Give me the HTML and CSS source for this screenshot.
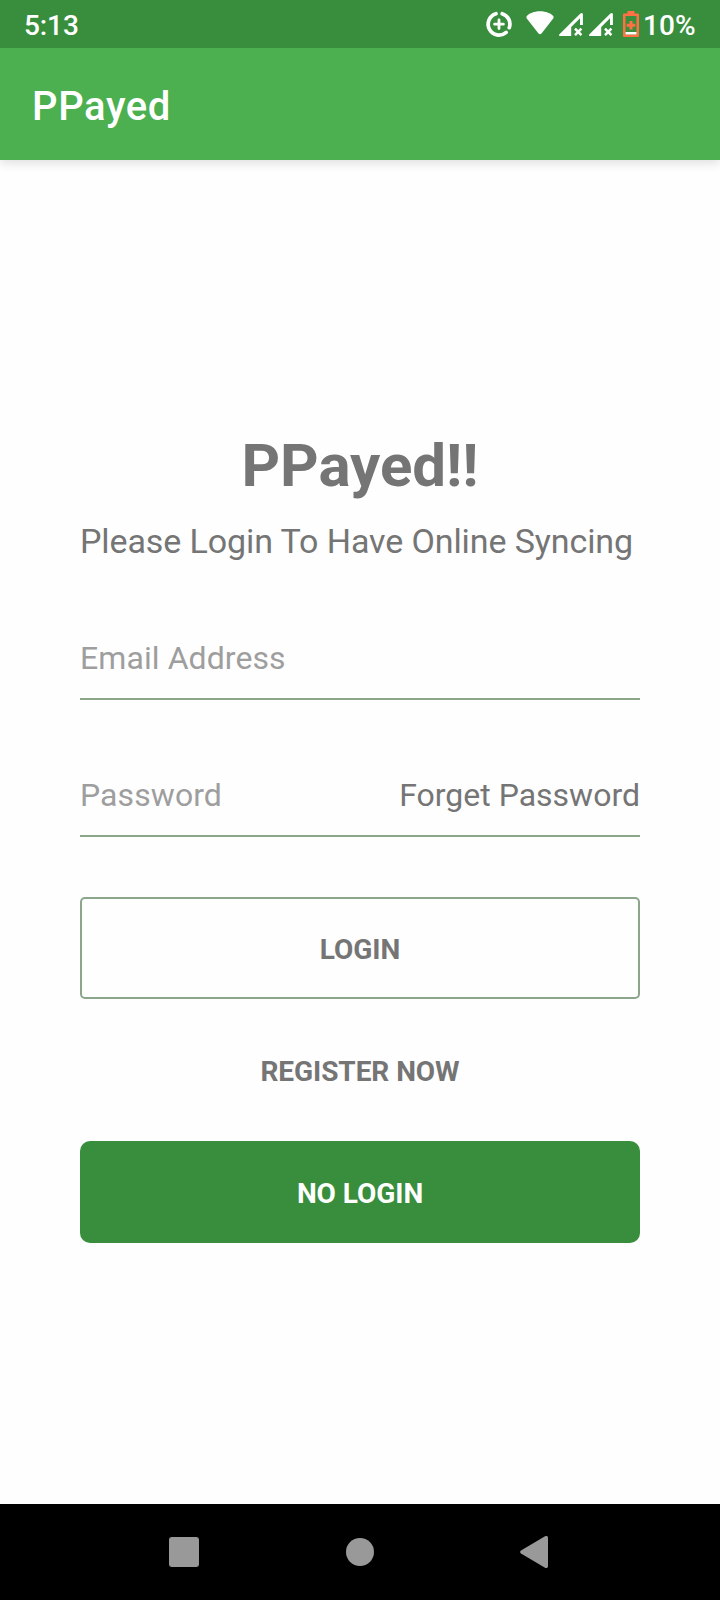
FILE: index.html
```html
<!DOCTYPE html>
<html lang="en">
<head>
<meta charset="utf-8">
<title>PPayed</title>
<link rel="stylesheet" href="styles.css">
</head>
<body>
<div class="screen">
  <header class="status">
    <span class="clock">5:13</span>
    <div class="status-icons">
      <svg width="160" height="48" viewBox="480 0 160 48">
        <g fill="none" stroke="#fff" stroke-linecap="round">
          <path d="M502.200 13.700A10.900 10.900 0 0 1 509.300 27.700" stroke-width="3.700"/>
          <path d="M496 13.700A10.900 10.900 0 1 0 506.200 32.400" stroke-width="3.700"/>
          <path d="M499 19.800v8.800M494.600 24.200h8.800" stroke-width="2.800"/>
        </g>
        <path fill="#fff" d="M540 11.300C533.700 11.300 529.500 13.500 526.800 15.900Q525.800 17 526.800 18.500L538.500 33.400Q540 35 541.500 33.400L553.200 18.500Q554.200 17 553.200 15.900C550.500 13.500 546.300 11.300 540 11.300Z"/>
        <g id="signal">
          <path fill="#fff" d="M560 36Q558.200 36 559.200 34.600L580.400 13.400Q582.900 12 582.900 14.500V25H580V18.200L571.200 27V36Z"/>
          <path d="M575 28.700L581.400 35.100M581.400 28.700L575 35.100" stroke="#fff" stroke-width="2.600"/>
        </g>
        <use href="#signal" x="30"/>
        <path fill="#ff7043" fill-rule="evenodd" d="M627.500 11h7v2.500h3.500q1 0 1 1v21.500q0 1-1 1h-14q-1 0-1-1v-21.500q0-1 1-1h3.500zM625.500 16v18.500h11V16z"/>
        <path fill="#ff7043" d="M629.500 21h3v2.800h2.800v3h-2.800v2.800h-3v-2.800h-2.800v-3h2.800z"/>
        <path fill="#fff" d="M625.500 32h11v2.500h-11z"/>
      </svg>
      <span class="battery">10%</span>
    </div>
  </header>
  <div class="appbar">PPayed</div>
  <main class="login">
    <h1 class="heading">PPayed!!</h1>
    <p class="subtitle">Please Login To Have Online Syncing</p>
    <div class="field"><span class="hint">Email Address</span></div>
    <div class="field"><span class="hint">Password</span><a class="forgot">Forget Password</a></div>
    <button class="btn outlined">LOGIN</button>
    <button class="btn plain">REGISTER NOW</button>
    <button class="btn filled">NO LOGIN</button>
  </main>
  <nav class="nav">
    <svg width="30" height="32" viewBox="0 0 30 32"><rect y="1" width="30" height="30" rx="3" fill="#999"/></svg>
    <svg width="28" height="32" viewBox="0 0 28 32"><circle cx="14" cy="16" r="14" fill="#999"/></svg>
    <svg width="28" height="32" viewBox="0 0 28 32"><path fill="#999" d="M1 14.500L25 .3Q28-.8 28 2V30Q28 32.800 25 31.700L1 17.500Q-.8 16 1 14.500Z"/></svg>
  </nav>
</div>
</body>
</html>
```
FILE: styles.css
```css
* { box-sizing: border-box; }
body {
  margin: 0;
  font-family: Roboto, sans-serif;
  color: #757575;
  background: #fefefe;
}
.screen {
  width: 720px;
  height: 1600px;
  display: flex;
  flex-direction: column;
}
.status {
  position: relative;
  z-index: 1;
  height: 48px;
  padding: 0 24.5px 0 24px;
  display: flex;
  justify-content: space-between;
  background: #388e3c;
  color: #fff;
  font-size: 28px;
  font-weight: 500;
}
.clock, .battery { line-height: 51px; }
.clock { letter-spacing: -.1px; }
.status-icons { display: flex; gap: 3.5px; }
.appbar {
  height: 112px;
  padding: 0 32px;
  line-height: 117px;
  font-size: 40px;
  font-weight: 500;
  letter-spacing: .6px;
  color: #fff;
  background: #4caf50;
  box-shadow: 0 3px 10px rgba(0, 0, 0, .13);
}
.login {
  flex: 1;
  padding: 271px 80px 0;
  display: flex;
  flex-direction: column;
}
.heading {
  margin: 0;
  font-size: 60px;
  line-height: 70px;
  text-align: center;
}
.subtitle {
  margin: 20px 0 57px;
  font-size: 34px;
  line-height: 40px;
  letter-spacing: -.1px;
  white-space: nowrap;
}
.field {
  height: 82px;
  margin-bottom: 55px;
  display: flex;
  justify-content: space-between;
  line-height: 80px;
  font-size: 32px;
  border-bottom: 2px solid #8ba68b;
}
.field + .field { margin-bottom: 60px; }
.hint { color: #9e9e9e; letter-spacing: .08px; }
.btn {
  height: 102px;
  margin: 0 0 20px;
  padding: 3px 0 0;
  border: 0;
  font: bold 28px Roboto, sans-serif;
  letter-spacing: -.05px;
  color: #757575;
  background: transparent;
}
.outlined { border: 2px solid #8ba68b; border-radius: 5px; }
.filled { color: #fff; background: #388e3c; border-radius: 10px; }
.nav {
  height: 96px;
  padding: 0 172px 0 169px;
  display: flex;
  justify-content: space-between;
  align-items: center;
  background: #000;
}
```
